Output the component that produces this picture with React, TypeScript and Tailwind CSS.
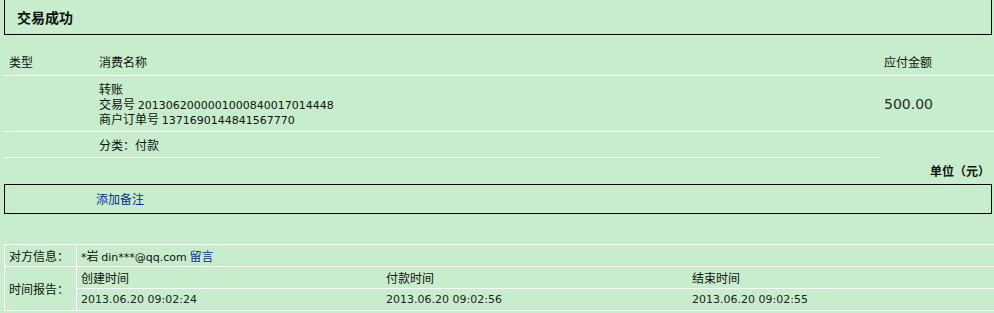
import React from 'react';

/** Latin/digit runs are drawn a touch smaller so they keep Tahoma-like widths. */
function Num({ children }: { children: React.ReactNode }): JSX.Element {
  return <span className="align-baseline font-['DejaVu_Sans',sans-serif] text-[11px] leading-none">{children}</span>;
}

const TIMES = [
  { label: '创建时间', value: '2013.06.20 09:02:24' },
  { label: '付款时间', value: '2013.06.20 09:02:56' },
  { label: '结束时间', value: '2013.06.20 09:02:55' },
];

export default function App(): JSX.Element {
  return (
    <div className="h-[313px] w-[994px] overflow-hidden bg-[#c7edcc] font-['Noto_Sans_CJK_SC',sans-serif] text-[12px] text-[#111]">
      {/* status box */}
      <div className="ml-[4px] mr-[2px] flex h-[35px] items-center border-x border-b border-black pl-[12px] text-[14px] font-bold">
        交易成功
      </div>

      {/* order detail */}
      <div className="ml-[4px] mt-[14px]">
        <div className="flex h-[27px] items-center border-b border-white">
          <div className="w-[95px] pl-[5px]">类型</div>
          <div className="flex-1">消费名称</div>
          <div className="w-[114px] pl-[4px]">应付金额</div>
        </div>
        <div className="flex h-[56px] border-b border-white">
          <div className="w-[95px]" />
          <div className="flex-1 py-[5px]">
            <div className="h-[15px] leading-[15px]">转账</div>
            <div className="h-[15px] leading-[15px]">
              交易号 <Num>2013062000001000840017014448</Num>
            </div>
            <div className="h-[15px] leading-[15px]">
              商户订单号 <Num>1371690144841567770</Num>
            </div>
          </div>
          <div className="flex w-[114px] items-center pl-[4px] pt-[1px] font-['DejaVu_Sans',sans-serif] text-[14px] text-[#2a2a2a]">
            500.00
          </div>
        </div>
        <div className="flex h-[26px] w-[876px] items-center border-b border-white">
          <div className="w-[95px]" />
          <div>分类：付款</div>
        </div>
        <div className="flex h-[26px] items-center justify-end pr-[4px] font-bold">单位（元）</div>
      </div>

      {/* remark box */}
      <div className="ml-[4px] mr-[2px] flex h-[30px] items-center border border-black pl-[91px]">
        <a className="text-[#0a2f96]">添加备注</a>
      </div>

      {/* counterpart + time report */}
      <div className="ml-[4px] mt-[30px] border-l border-t border-white">
        <div className="flex h-[22px] border-b border-white">
          <div className="flex w-[72px] items-center border-r border-white pl-[4px]">对方信息：</div>
          <div className="h-[21px] pl-[4px] leading-[21px]">
            <Num>*</Num>岩 <Num>din***@qq.com</Num> <a className="text-[#0a2f96]">留言</a>
          </div>
        </div>
        <div className="flex">
          <div className="flex w-[72px] items-center border-b border-r border-white pl-[4px]">时间报告：</div>
          <div className="flex-1">
            <div className="grid h-[22px] grid-cols-[305px_306px_1fr] border-b border-white">
              {TIMES.map((t) => (
                <div key={t.label} className="flex items-center pl-[4px]">
                  {t.label}
                </div>
              ))}
            </div>
            <div className="grid h-[22px] grid-cols-[305px_306px_1fr] border-b border-white">
              {TIMES.map((t) => (
                <div key={t.label} className="flex items-center pl-[4px] text-[#222]">
                  <Num>{t.value}</Num>
                </div>
              ))}
            </div>
          </div>
        </div>
      </div>
    </div>
  );
}
